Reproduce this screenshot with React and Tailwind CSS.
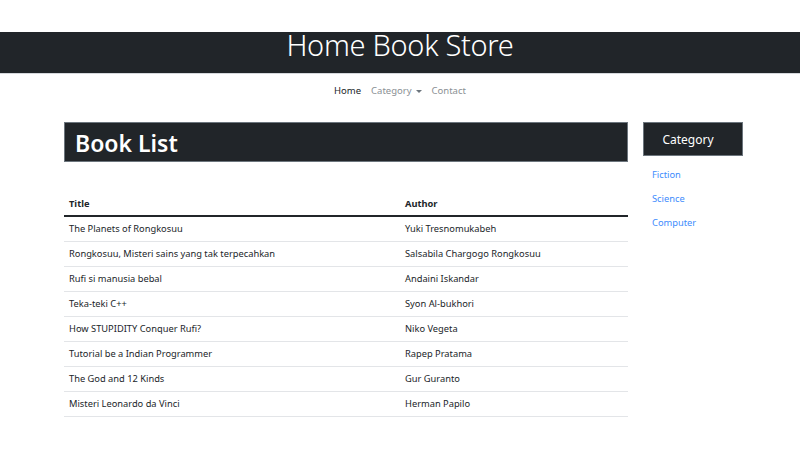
const books = [
  { title: 'The Planets of Rongkosuu', author: 'Yuki Tresnomukabeh' },
  { title: 'Rongkosuu, Misteri sains yang tak terpecahkan', author: 'Salsabila Chargogo Rongkosuu' },
  { title: 'Rufi si manusia bebal', author: 'Andaini Iskandar' },
  { title: 'Teka-teki C++', author: 'Syon Al-bukhori' },
  { title: 'How STUPIDITY Conquer Rufi?', author: 'Niko Vegeta' },
  { title: 'Tutorial be a Indian Programmer', author: 'Rapep Pratama' },
  { title: 'The God and 12 Kinds', author: 'Gur Guranto' },
  { title: 'Misteri Leonardo da Vinci', author: 'Herman Papilo' },
]

const categories = ['Fiction', 'Science', 'Computer']

export default function App() {
  return (
    <div className="w-[800px] h-[450px] bg-white text-[#212529] font-['Noto_Sans',sans-serif] overflow-hidden">
      {/* Header */}
      <div className="pt-[32px]">
        <div className="h-[42px] bg-[#212529] border-b border-[#d5d8dc] flex justify-center">
          <h1 className="text-white text-[29px] font-light leading-[25px] tracking-[-0.3px]">Home Book Store</h1>
        </div>
      </div>

      {/* Nav */}
      <nav className="flex justify-center gap-[10px] text-[9.5px] mt-[10px] h-[14px] items-center">
        <a className="text-[#212529]">Home</a>
        <a className="text-[#8a8f94] flex items-center gap-[4px]">
          Category
          <span className="inline-block w-0 h-0 border-l-[3px] border-r-[3px] border-t-[3px] border-l-transparent border-r-transparent border-t-[#6c757d]" />
        </a>
        <a className="text-[#8a8f94]">Contact</a>
      </nav>

      {/* Content */}
      <div className="flex gap-[15px] pl-[64px] mt-[24px]">
        <div className="w-[564px]">
          <div className="h-[40px] bg-[#212529] border border-[#6c757d] flex items-center pl-[10px] pt-[2px]">
            <h2 className="text-white text-[23px] font-semibold leading-none">Book List</h2>
          </div>

          <table className="w-full mt-[30px] text-[9.3px] border-collapse">
            <thead>
              <tr className="border-b-2 border-[#212529]">
                <th className="text-left font-bold w-[336px] pl-[5px] h-[24px] pt-[1px]">Title</th>
                <th className="text-left font-bold pl-[5px] pt-[1px]">Author</th>
              </tr>
            </thead>
            <tbody>
              {books.map((b) => (
                <tr key={b.title} className="border-b border-[#e3e5e8]">
                  <td className="pl-[5px] h-[25px]">{b.title}</td>
                  <td className="pl-[5px]">{b.author}</td>
                </tr>
              ))}
            </tbody>
          </table>
        </div>

        <div className="w-[100px]">
          <div className="h-[34px] bg-[#212529] border border-[#6c757d] flex items-center justify-center pr-[10px] pt-[2px]">
            <span className="text-white text-[12px]">Category</span>
          </div>
          <ul className="mt-[12px] pl-[9px] flex flex-col gap-[10px]">
            {categories.map((c) => (
              <li key={c} className="text-[9.3px] leading-[14px] text-[#3d8bfd]">{c}</li>
            ))}
          </ul>
        </div>
      </div>
    </div>
  )
}
